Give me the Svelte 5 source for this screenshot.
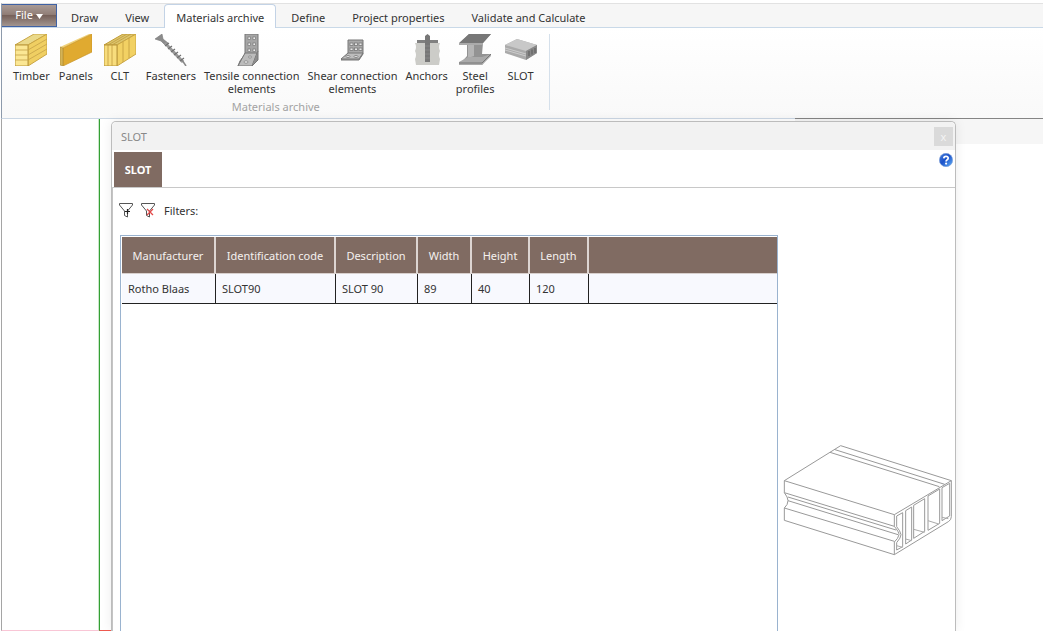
<script>
  const tabs = ['Draw', 'View', 'Materials archive', 'Define', 'Project properties', 'Validate and Calculate']
  let activeTab = $state('Materials archive')

  const tools = [
    { icon: 'timber', lines: ['Timber'] },
    { icon: 'panels', lines: ['Panels'] },
    { icon: 'clt', lines: ['CLT'] },
    { icon: 'screw', lines: ['Fasteners'] },
    { icon: 'tensile', lines: ['Tensile connection', 'elements'] },
    { icon: 'shear', lines: ['Shear connection', 'elements'] },
    { icon: 'anchor', lines: ['Anchors'] },
    { icon: 'steel', lines: ['Steel', 'profiles'] },
    { icon: 'slot', lines: ['SLOT'] },
  ]

  const columns = [
    { key: 'manufacturer', label: 'Manufacturer', width: 94 },
    { key: 'code', label: 'Identification code', width: 120 },
    { key: 'description', label: 'Description', width: 82 },
    { key: 'width', label: 'Width', width: 54 },
    { key: 'height', label: 'Height', width: 58 },
    { key: 'length', label: 'Length', width: 59 },
  ]

  const rows = [
    { manufacturer: 'Rotho Blaas', code: 'SLOT90', description: 'SLOT 90', width: 89, height: 40, length: 120 },
  ]
</script>

{#snippet toolIcon(name)}
  <svg class="tool-icon" viewBox="0 0 32 32" aria-hidden="true">
    {#if name == 'timber'}
      <path d="M0 11 L19 0 H32 L13 11Z" fill="#ead98a" stroke="#c9a545" />
      <path d="M13 11 L32 0 V20 L13 32Z" fill="#f0cf62" stroke="#c9a545" />
      <path d="M0 11 H13 V32 H0Z" fill="#fbe794" stroke="#b8953b" />
      <path d="M0 16 H13 L32 5 M0 21 H13 L32 10 M0 26 H13 L32 15" fill="none" stroke="#c5a248" stroke-width=".8" />
    {:else if name == 'panels'}
      <path d="M0 13 L29 0 H32 L3 14Z" fill="#f0d27a" />
      <path d="M3 14 L32 0 V18 L3 32Z" fill="#e0aa30" stroke="#c99327" stroke-width=".7" />
      <path d="M0 13 L3 14 V32 L0 31Z" fill="#d5b355" stroke="#a98a35" stroke-width=".6" />
    {:else if name == 'clt'}
      <path d="M0 11 L19 0 H32 L13 11Z" fill="#dcc56c" stroke="#c19b36" />
      <path d="M13 11 L32 0 V20 L13 32Z" fill="#f2d163" stroke="#c9a545" />
      <path d="M0 11 H13 V32 H0Z" fill="#f8dd7c" stroke="#b8953b" />
      <path d="M4 32 V11 L23 0 M8 32 V11 L27 0 M19 8 V28 M25 4 V24" fill="none" stroke="#c09c40" stroke-width=".8" />
    {:else if name == 'screw'}
      <path d="M0 5 L7 0 L8 5 L13 9 L11 12 L6 7Z" fill="#8b8b8b" stroke="#777" stroke-width=".6" />
      <path d="M10 9 L28 28" stroke="#999" stroke-width="3" />
      <path d="M27 26 L31 32" stroke="#888" stroke-width="1.5" />
      <path d="M10 12 L14 9 M13 15 L17 12 M16 18 L20 15 M19 21 L23 18 M22 24 L26 21 M25 27 L29 24" stroke="#707070" stroke-width="1.2" />
    {:else if name == 'tensile'}
      <path d="M9 0 H22 V17 L16 32 H2 L4 27 L9 20Z" fill="#a5a5a5" stroke="#777" />
      <path d="M9 19 H21 L16 32 H2Z" fill="#bcbcbc" stroke="#777" />
      <path d="M22 17 V26 L16 32" fill="#8d8d8d" stroke="#777" />
      <g fill="#eee" stroke="#777" stroke-width=".7">
        <rect x="12" y="3" width="2.5" height="2.5" /><rect x="17" y="3" width="2.5" height="2.5" />
        <rect x="12" y="9" width="2.5" height="2.5" /><rect x="17" y="9" width="2.5" height="2.5" />
        <rect x="12" y="15" width="2.5" height="2.5" /><rect x="17" y="15" width="2.5" height="2.5" />
        <ellipse cx="10" cy="28" rx="2" ry="1.2" /><ellipse cx="14" cy="23" rx="1.6" ry="1" />
      </g>
    {:else if name == 'shear'}
      <path d="M11 6 H26 V20 L22 26 H4 L11 19Z" fill="#a9a9a9" stroke="#777" />
      <path d="M11 19 H26 L22 25 H4Z" fill="#bdbdbd" stroke="#777" />
      <g fill="#e6e6e6" stroke="#777" stroke-width=".8">
        <rect x="13" y="9" width="3" height="2.5" /><rect x="17.5" y="9" width="3" height="2.5" /><rect x="22" y="9" width="3" height="2.5" />
        <rect x="13" y="14" width="3" height="2.5" /><rect x="17.5" y="14" width="3" height="2.5" /><rect x="22" y="14" width="3" height="2.5" />
        <ellipse cx="11" cy="22.5" rx="2" ry="1" /><ellipse cx="19" cy="22.5" rx="2" ry="1" />
      </g>
    {:else if name == 'anchor'}
      <path d="M4 9 H29 Q27 13 29 17 Q27 21 29 25 L28 31 H5 L4 25 Q6 21 4 17 Q6 13 4 9Z" fill="#ccccc8" />
      <path d="M6 6 H27 V9 H6Z" fill="#808080" />
      <path d="M14 2 L16.5 0 L19 2 V28 H14Z" fill="#777" />
      <path d="M14 12 H19 M14 16 H19 M14 20 H19 M14 24 H19" stroke="#888" />
    {:else if name == 'steel'}
      <path d="M0 10 L10 0 H32 L24 9 L23 20 L32 20 L23 31 H0 L8 22 V11Z" fill="#939393" />
      <path d="M0 9 L10 0 H32 L24 9Z" fill="#777" />
      <path d="M0 9 H24 V11 H0Z" fill="#aaa" />
      <path d="M9 11 H15 V22 L9 24Z" fill="#b5b5b5" />
      <path d="M0 28 L9 23 L23 23 L32 20 V22 L23 31 H0Z" fill="#aaa" />
      <path d="M0 29 H23 L32 20" fill="none" stroke="#777" />
    {:else}
      <path d="M0 11 L12 5 L32 11 V19 L21 26 L0 19Z" fill="#aaa" />
      <path d="M0 11 L12 5 L32 11 L21 17Z" fill="#c8c8c8" />
      <path d="M0 14 L21 20 M0 16 L21 22" stroke="#ccc" />
      <path d="M21 17 L32 11 V19 L21 26Z" fill="#888" />
      <path d="M24 17 V22 M27 15.5 V20.5 M30 14 V19" stroke="#666" stroke-width="1.3" />
    {/if}
  </svg>
{/snippet}

<div class="app">
  <header class="ribbon">
    <nav class="tabs">
      <button class="file">File <svg width="7" height="5" viewBox="0 0 7 5" aria-hidden="true"><path d="M0 0 H7 L3.5 5Z" fill="#fff" /></svg></button>
      {#each tabs as tab}
        <button class="tab" class:active={tab == activeTab} onclick={() => (activeTab = tab)}>{tab}</button>
      {/each}
    </nav>
    <div class="ribbon-body">
      <section class="group">
        <div class="tools">
          {#each tools as tool}
            <button class="tool">
              {@render toolIcon(tool.icon)}
              {#each tool.lines as line}
                <span>{line}</span>
              {/each}
            </button>
          {/each}
        </div>
        <div class="group-name">Materials archive</div>
      </section>
    </div>
  </header>

  <main class="workspace">
    <div class="side"></div>
    <div class="canvas"></div>
    <div class="docked"></div>

    <section class="window">
      <div class="titlebar">
        <span>SLOT</span>
        <button class="close" aria-label="Close">x</button>
      </div>
      <div class="window-tabs">
        <button class="window-tab">SLOT</button>
        <button class="help" aria-label="Help">
          <svg width="14" height="14" viewBox="0 0 14 14" aria-hidden="true">
            <defs>
              <linearGradient id="help" x1="0" y1="0" x2="1" y2="1">
                <stop offset="0" stop-color="#4a83dc" />
                <stop offset=".45" stop-color="#1b51c9" />
                <stop offset="1" stop-color="#64b4fa" />
              </linearGradient>
            </defs>
            <circle cx="7" cy="7" r="6.7" fill="url(#help)" stroke="#7f9fd6" stroke-width=".6" />
            <path d="M4.8 5.4 Q4.9 3.4 7 3.4 Q9.3 3.4 9.2 5.2 Q9.1 6.3 7.9 6.9 Q7.1 7.3 7.1 8.6" fill="none" stroke="#fff" stroke-width="1.7" />
            <circle cx="7.1" cy="10.6" r="1.1" fill="#fff" />
          </svg>
        </button>
      </div>
      <div class="window-body">
        <div class="filters">
          <button class="filter" aria-label="Add filter">
            <svg width="16" height="16" viewBox="0 0 16 16" fill="none" stroke="#555" aria-hidden="true">
              <path d="M1.5 1.5 H14.5 V3 L9.500 9 V15 L6.5 13.5 V9 L1.5 3Z" />
              <path d="M7 9.5 H12 M9.5 7 V12" stroke="#222" stroke-width="1.2" />
            </svg>
          </button>
          <button class="filter" aria-label="Remove filters">
            <svg width="16" height="16" viewBox="0 0 16 16" fill="none" stroke="#555" aria-hidden="true">
              <path d="M1.5 1.5 H14.5 V3 L9.5 9 V15 L6.5 13.5 V9 L1.5 3Z" />
              <path d="M7 7 L13 13 M13 7 L7 13" stroke="#e34848" stroke-width="1.3" />
            </svg>
          </button>
          <span>Filters:</span>
        </div>
        <div class="content">
          <div class="grid">
            <table>
              <colgroup>
                {#each columns as column}
                  <col style="width: {column.width}px" />
                {/each}
                <col />
              </colgroup>
              <thead>
                <tr>
                  {#each columns as column}
                    <th>{column.label}</th>
                  {/each}
                  <th></th>
                </tr>
              </thead>
              <tbody>
                {#each rows as row}
                  <tr>
                    {#each columns as column}
                      <td>{row[column.key]}</td>
                    {/each}
                    <td></td>
                  </tr>
                {/each}
              </tbody>
            </table>
          </div>
          <div class="preview">
            <svg viewBox="36 42 516 336" fill="none" stroke="#999" stroke-width="3" stroke-linejoin="round" role="img" aria-label="SLOT 90">
              <path d="M43 152 L212 47 L544 152 L373 254Z" />
              <path d="M192 58 L524 163 M180 67 L508 170" />
              <path d="M43 152 V188 Q54 202 54 212 Q54 224 43 234 V271 L373 374" />
              <path d="M43 188 L373 289 M54 201 L378 300 M54 212 L384 314 M43 234 L373 334" />
              <path d="M373 254 V289 Q387 306 387 314 Q385 325 373 336 V374 L535 275 Q544 270 544 260 V152" />
              <path d="M380 258 L398 248 V350 L380 360 V338 Q393 323 393 314 Q391 303 380 290Z" />
              <path d="M407 242 L425 231 V330 L407 342Z" />
              <path d="M431 226 L464 206 V304 L431 325Z" />
              <path d="M474 198 L509 177 V280 L474 301Z" />
              <path d="M516 173 L539 160 V258 L516 272Z" />
              <path d="M380 347 L398 352 M407 327 L425 332 M431 298 L464 307 M474 272 L506 282 M516 262 L535 266" stroke="#aaa" />
            </svg>
          </div>
        </div>
      </div>
    </section>
  </main>
</div>

<style>
  :global(body) {
    margin: 0;
    background: #fff;
  }
  .app {
    display: flex;
    flex-direction: column;
    box-sizing: border-box;
    height: 100vh;
    padding-top: 3px;
    overflow: hidden;
    font: 11px/13px 'Noto Sans', 'Open Sans', sans-serif;
    color: #333;
  }
  button {
    font: inherit;
    color: inherit;
    padding: 0;
    border: none;
    background: none;
    cursor: pointer;
  }

  .ribbon {
    margin-left: 1px;
    border-left: 1px solid #8d9aab;
    border-top: 1px solid #e2e2e2;
    border-bottom: 1px solid #cbd7e4;
  }
  .tabs {
    display: flex;
    gap: 3px;
    height: 24px;
    box-sizing: border-box;
    background: #f6f6f6;
    border-bottom: 1px solid #c9d9e8;
  }
  .file {
    width: 55px;
    height: 23px;
    margin-right: -1px;
    padding-bottom: 2px;
    box-sizing: border-box;
    border: 1px solid #3f62a5;
    border-left: none;
    background: linear-gradient(#a99b96, #917e77 45%, #76615a 50%, #a3958f);
    color: #fff;
  }
  .tab {
    height: 24px;
    box-sizing: border-box;
    padding: 1px 11px 0;
    border: 1px solid transparent;
    border-bottom: none;
    white-space: nowrap;
  }
  .tab.active {
    background: #fff;
    border-color: #c3d3e6;
    border-radius: 4px 4px 0 0;
  }
  .ribbon-body {
    display: flex;
    height: 90px;
    box-sizing: border-box;
    padding: 6px 0 8px 7px;
    background: linear-gradient(#fff, #f9f9f9);
  }
  .group {
    display: flex;
    flex-direction: column;
    justify-content: space-between;
    padding-right: 6px;
    border-right: 1px solid #d5e0eb;
  }
  .tools {
    display: flex;
    align-items: flex-start;
  }
  .tool {
    display: flex;
    flex-direction: column;
    align-items: center;
    min-width: 44px;
    padding: 0 4px;
    box-sizing: border-box;
    white-space: nowrap;
  }
  .tool-icon {
    width: 32px;
    height: 32px;
    margin-bottom: 3px;
  }
  .group-name {
    line-height: 6px;
    text-align: center;
    color: #a3a3a3;
  }

  .workspace {
    flex: 1;
    position: relative;
    display: flex;
    min-height: 0;
  }
  .side {
    width: 96px;
    margin-left: 1px;
    border-left: 1px solid #a5a5a5;
    border-bottom: 1px solid #f9c6d6;
    border-right: 1px solid #c9e6c9;
  }
  .canvas {
    flex: 1;
    border-left: 1px solid #34a034;
    border-bottom: 1px solid #ef5a50;
  }
  .docked {
    width: 248px;
    height: 25px;
    margin-top: -1px;
    border-top: 1px solid #858585;
    background: #f6f6f6;
  }

  .window {
    position: absolute;
    top: 2px;
    left: 111px;
    right: 87px;
    bottom: 0;
    display: flex;
    flex-direction: column;
    border: 1px solid #bcbcbc;
    border-bottom: none;
    border-radius: 5px 5px 0 0;
    background: #fff;
    box-shadow: 0 0 12px rgba(0, 0, 0, 0.08);
  }
  .titlebar {
    display: flex;
    align-items: center;
    justify-content: space-between;
    height: 28px;
    padding: 0 2px 0 9px;
    border-radius: 5px 5px 0 0;
    background: #f2f2f2;
    color: #888;
  }
  .close {
    width: 19px;
    height: 19px;
    background: #dadada;
    color: #f4f4f4;
  }
  .window-tabs {
    display: flex;
    align-items: flex-start;
    justify-content: space-between;
    padding: 2px 2px 0;
    border-bottom: 1px solid #c8c8c8;
  }
  .window-tab {
    width: 48px;
    height: 35px;
    background: #806b62;
    color: #fff;
    font-weight: 700;
  }
  .help {
    display: flex;
    margin-top: 1px;
  }
  .window-body {
    flex: 1;
    display: flex;
    flex-direction: column;
    min-height: 0;
    border-left: 1px solid #c4c4c4;
  }
  .filters {
    display: flex;
    align-items: center;
    gap: 6px;
    padding: 14px 5px 17px;
  }
  .filter {
    display: flex;
  }
  .filters span {
    margin-left: 2px;
  }
  .content {
    flex: 1;
    display: flex;
    min-height: 0;
  }
  .grid {
    flex: 1;
    margin-left: 7px;
    padding: 1px 0 0 1px;
    border: 1px solid #9ab3cf;
    border-bottom: none;
  }
  table {
    width: 100%;
    table-layout: fixed;
    border-collapse: separate;
    border-spacing: 0;
  }
  th {
    height: 36px;
    padding: 0;
    background: #806b62;
    border-right: 2px solid #ddd5d2;
    border-bottom: 1px solid #d8d0cd;
    color: #f5f1ef;
    font-weight: 400;
    white-space: nowrap;
  }
  td {
    height: 29px;
    padding: 0 6px;
    background: #f8f9fe;
    border-right: 1px solid #222;
    border-bottom: 1px solid #222;
    white-space: nowrap;
  }
  th:last-child,
  td:last-child {
    border-right: none;
  }
  .preview {
    width: 177px;
    display: flex;
    align-items: center;
    justify-content: center;
    padding: 134px 0 0 2px;
    box-sizing: border-box;
  }
  .preview svg {
    width: 172px;
    height: 112px;
  }
</style>
